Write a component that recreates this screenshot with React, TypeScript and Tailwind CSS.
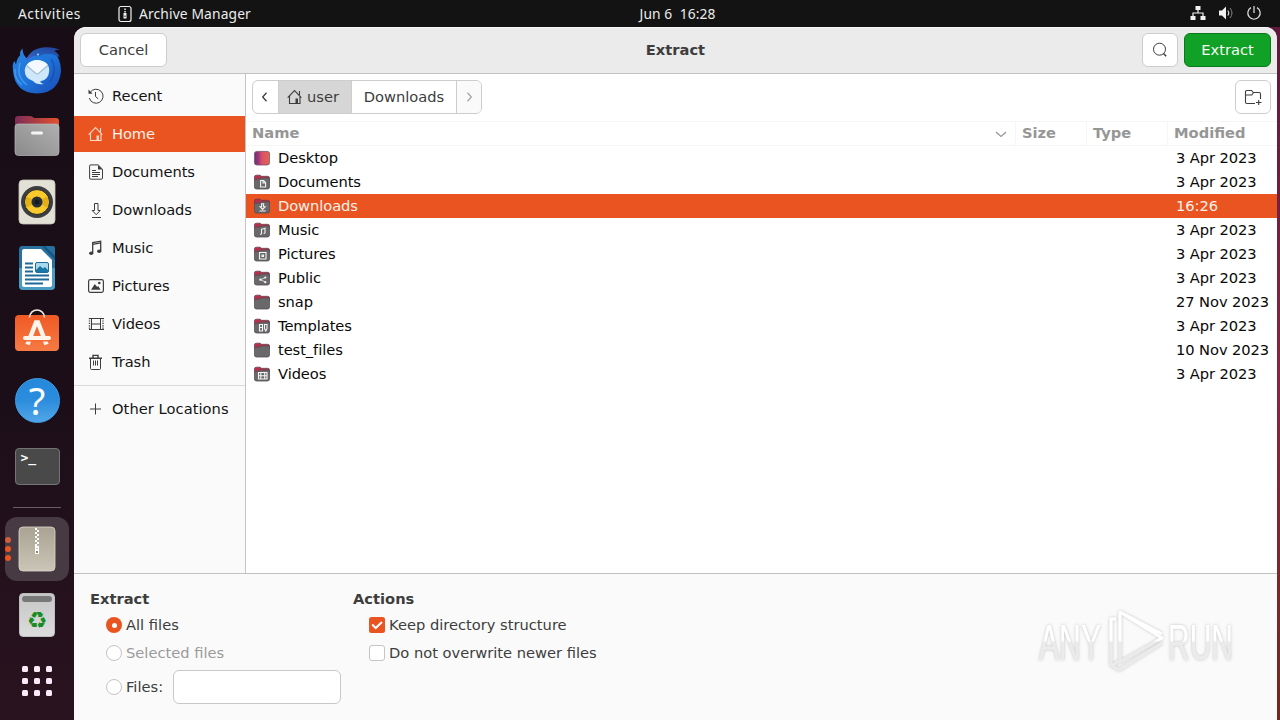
import type { ReactNode } from 'react';

interface Place {
  label: string;
  icon: ReactNode;
  active?: boolean;
}

interface FileRow {
  name: string;
  modified: string;
  emblem?: ReactNode;
  selected?: boolean;
}

const line = { fill: 'none', stroke: 'currentColor', strokeWidth: 1 };
const emblem = { fill: 'none', stroke: '#f4f4f4', strokeWidth: 1.1 };

function Icon({ children, className = '' }: { children: ReactNode; className?: string }) {
  return (
    <svg width="16" height="16" viewBox="0 0 16 16" className={`shrink-0 ${className}`}>
      {children}
    </svg>
  );
}

function HomeIcon() {
  return (
    <Icon>
      <path {...line} strokeWidth="1.1" d="M.7 8.6 7.5 1.6l6.8 7M2.5 7.2v7.3h10.500V7.200M12.500 2v4" />
      <path fill="currentColor" d="M8.500 9.500h2.500v5H8.500z" />
    </Icon>
  );
}

const PLACES: Place[] = [
  {
    label: 'Recent',
    icon: (
      <Icon>
        <path {...line} d="M2.2 4.4A7 7 0 1 1 1.3 10M7.5 4v4.5l2.7 2.3" />
        <path fill="currentColor" d="M.5 1.5v4.3h4.1z" />
      </Icon>
    ),
  },
  { label: 'Home', icon: <HomeIcon />, active: true },
  {
    label: 'Documents',
    icon: (
      <Icon>
        <path {...line} d="M3 .9h7.2l4.3 4.3V14a1.2 1.2 0 0 1-1.2 1.2H3A1.2 1.2 0 0 1 1.600 14V2.100A1.200 1.200 0 0 1 3 .9zM4 6.500h4M4 8.500h8M4 10.500h8M4 12.500h6" />
        <path fill="currentColor" d="M10 1v4.500h4.500z" />
      </Icon>
    ),
  },
  {
    label: 'Downloads',
    icon: (
      <Icon>
        <path {...line} d="M6.500 1.500h3.500v7h2.200l-4 4.200-4-4.200h2.300zM4 15.500h9" />
      </Icon>
    ),
  },
  {
    label: 'Music',
    icon: (
      <Icon>
        <path {...line} strokeWidth="1.3" d="M4.700 13V2.600l8-1.400V11M4.700 4.300l8-1.400" />
        <ellipse cx="3.200" cy="13.200" rx="2.100" ry="1.800" fill="currentColor" />
        <ellipse cx="11.200" cy="11.200" rx="2.100" ry="1.800" fill="currentColor" />
      </Icon>
    ),
  },
  {
    label: 'Pictures',
    icon: (
      <Icon>
        <rect {...line} x=".6" y="1.600" width="14.800" height="12.800" rx="1.800" strokeWidth="1.2" />
        <path fill="currentColor" d="M3 11.800 6.800 6l2.400 3 1-1 2.400 3.800z" />
        <circle cx="11.300" cy="5" r="1.300" fill="currentColor" />
      </Icon>
    ),
  },
  {
    label: 'Videos',
    icon: (
      <Icon>
        <path {...line} d="M3.500 2v12M12.500 2v12M1 2.500h15M1 13.500h15M3.500 8h9" />
        <path {...line} strokeWidth="1.400" strokeDasharray="1.2 1.2" d="M1.500 2v12M15 2v12" />
      </Icon>
    ),
  },
  {
    label: 'Trash',
    icon: (
      <Icon>
        <path {...line} d="M2.500 5v9.400q0 1.100 1 1.100h8q1 0 1-1.100V5M5.500 6.500v5M7.500 6.500v5M9.500 6.500v5" />
        <path {...line} strokeWidth="1.4" d="M1 4.200h13M5 3.600V1.400h5v2.200" />
      </Icon>
    ),
  },
];

const FILES: FileRow[] = [
  { name: 'Desktop', modified: '3 Apr 2023' },
  {
    name: 'Documents',
    modified: '3 Apr 2023',
    emblem: <path {...emblem} d="M6.6 6.5h3l2 2V13h-5zM9 6.5V9h2.5" />,
  },
  {
    name: 'Downloads',
    modified: '16:26',
    selected: true,
    emblem: <path {...emblem} d="M7.600 5.800h2v3h1.500l-2.500 2.600-2.500-2.600h1.500zM5.500 13h6.200" />,
  },
  {
    name: 'Music',
    modified: '3 Apr 2023',
    emblem: <path {...emblem} d="M7.500 12V7.300l3.500-1v5M6 12.300h1.500M9.600 11.300H11" />,
  },
  {
    name: 'Pictures',
    modified: '3 Apr 2023',
    emblem: <path {...emblem} d="M5.500 6.500H12V13H5.500zM8 9h1.500v1.500H8z" />,
  },
  {
    name: 'Public',
    modified: '3 Apr 2023',
    emblem: (
      <g fill="#f4f4f4">
        <path {...emblem} strokeWidth=".8" d="m11.500 7.500-5 2.200 5 2.500" />
        <circle cx="6.300" cy="9.700" r="1.100" />
        <circle cx="11.300" cy="7.500" r="1.100" />
        <circle cx="11.300" cy="12.200" r="1.100" />
      </g>
    ),
  },
  { name: 'snap', modified: '27 Nov 2023' },
  {
    name: 'Templates',
    modified: '3 Apr 2023',
    emblem: <path {...emblem} d="M5.500 6.500h3V13h-3zM5.500 9.500h3M10.500 6.500H13v4L11.800 13l-1.300-2.500z" />,
  },
  { name: 'test_files', modified: '10 Nov 2023' },
  {
    name: 'Videos',
    modified: '3 Apr 2023',
    emblem: <path {...emblem} d="M4.500 6.500H13V13H4.500zM6.800 6.500V13M10.700 6.500V13M4.500 9.700H13" />,
  },
];

function FolderIcon({ row }: { row: FileRow }) {
  if (row.name === 'Desktop') {
    return (
      <Icon>
        <defs>
          <linearGradient id="desk">
            <stop stopColor="#6f2f7c" />
            <stop offset=".25" stopColor="#963679" />
            <stop offset=".5" stopColor="#dd5069" />
            <stop offset="1" stopColor="#e4664b" />
          </linearGradient>
        </defs>
        <rect x=".4" y="1.400" width="15.200" height="13.600" rx="2.500" fill="url(#desk)" stroke="#79506c" strokeWidth=".8" />
      </Icon>
    );
  }
  return (
    <Icon>
      <path fill="#b5304b" stroke="#5c3a46" strokeWidth=".7" d="M.4 6V3.200q0-2 2-2H6l1.500 1.100h6.100q2 0 2 2V7H.4z" />
      <path fill="#6a686b" stroke="#514e51" strokeWidth=".8" d="M.4 6.200q0-1 1-1h4.300L7.200 4h7q1.400 0 1.400 1.200v7.600q0 2.200-2.200 2.200H2.600Q.4 15 .4 12.800z" />
      {row.emblem}
    </Icon>
  );
}

function ThunderbirdIcon() {
  return (
    <svg width="50" height="50" viewBox="0 0 50 50">
      <defs>
        <linearGradient id="tb" x1="0" y1="0" x2="1" y2="1">
          <stop stopColor="#2c84df" />
          <stop offset=".5" stopColor="#1e74da" />
          <stop offset="1" stopColor="#1a4bb5" />
        </linearGradient>
        <linearGradient id="tbHead" x1="0" y1="1" x2="1" y2="0">
          <stop stopColor="#5a51b8" />
          <stop offset=".4" stopColor="#245cb6" />
          <stop offset="1" stopColor="#273e98" />
        </linearGradient>
      </defs>
      <path fill="url(#tb)" d="M1 26q-1-8 1.500-10L4 19.500Q5 13 8 10.500 7.500 6 10.500 3.500q0 6 4 9.500L24 6l18 1q7 7 7 19-2 22-24 22.500Q3 48 1 26z" />
      <path fill="url(#tbHead)" d="M14 15Q19 2.500 34 2.200q8-.5 14 2.500-4 0-6 1.300 4 1.500 5.500 6-12-6-20-1-4-1-7 .5z" />
      <path fill="none" stroke="#55b0f8" strokeWidth="1.500" d="M3 24q-1 10 7 16M8 18q-4 14 7 22" opacity=".6" />
      <path fill="none" stroke="#143fa0" strokeWidth="1.500" d="M39 14q7 11-1 23" opacity=".5" />
      <path fill="#cfe7fa" d="M25.500 15q12 1 11.700 11-.5 9-9.200 10.500 1 1.500 3.500 2.500-7 1-10.500-3-8.500-2.500-8.300-11Q14 15.500 25.500 15z" />
      <path fill="#f3f9fe" d="M15 19.500q10-9 20.500 0L26.500 29q-1.200 1-2.400 0z" />
      <path fill="none" stroke="#a5bfd4" strokeWidth="1.2" d="m14.500 20.500 9.500 8q1.200 1 2.400 0l9.500-8" />
      <circle cx="26" cy="9.500" r="1" fill="#a7d6fa" />
    </svg>
  );
}

function FilesIcon() {
  return (
    <svg width="46" height="44" viewBox="0 0 46 44">
      <defs>
        <linearGradient id="ft">
          <stop stopColor="#7b2c57" />
          <stop offset="1" stopColor="#e4522c" />
        </linearGradient>
        <linearGradient id="fb" x1="0" y1="1" x2="1" y2="0">
          <stop stopColor="#8a8a8a" />
          <stop offset="1" stopColor="#b0b0b0" />
        </linearGradient>
      </defs>
      <path fill="url(#ft)" d="M1 14V5q0-3 3-3h12q2 0 4 2h22q3 0 3 3v9H1z" />
      <path fill="url(#fb)" stroke="#b9b9b9" strokeWidth=".7" d="M1 13q0-3 3-3h38q3 0 3 3v25q0 3.500-3.500 3.500h-37Q1 41.500 1 38z" />
      <rect x="17" y="17.500" width="12" height="3" rx="1.500" fill="#f5f5f5" />
    </svg>
  );
}

function SpeakerIcon() {
  return (
    <svg width="38" height="46" viewBox="0 0 38 46">
      <rect x="1" y="1" width="36" height="44" rx="4" fill="#e3e0d5" stroke="#c7c4ba" strokeWidth=".8" />
      <circle cx="19" cy="23" r="16" fill="#3c3d40" />
      <circle cx="19" cy="23" r="12.500" fill="#f7c92d" stroke="#25272c" />
      <path fill="#e3ae19" d="m19 23-11-6v12zM19 23l11-6v12z" />
      <circle cx="19" cy="23" r="5.500" fill="#272d35" />
      <circle cx="19" cy="23" r="2.500" fill="#161a20" />
    </svg>
  );
}

function WriterIcon() {
  return (
    <svg width="38" height="46" viewBox="0 0 38 46">
      <path fill="#28709d" d="M4 1h21l12 12v28q0 4-4 4H5q-4 0-4-4V5q0-4 3-4z" />
      <path fill="#55a9ce" d="M1 23h36v18q0 4-4 4H5q-4 0-4-4z" opacity=".75" />
      <path fill="#28709d" d="M26 1h9q2 0 2 2v10z" />
      <path fill="#155783" d="M24 1h3l10 10v4z" />
      <path fill="#fff" d="M6 4h17l11 11v25q0 2-2 2H6q-2 0-2-2V6q0-2 2-2z" />
      <path stroke="#1c6b98" strokeWidth="2" d="M7 18.500h8M7 22.500h8M7 26.500h8M7 30.500h24M7 34.500h24M7 38.500h18" />
      <rect x="17.500" y="17.500" width="13" height="10" rx="1.500" fill="#a8d9ed" stroke="#1c6b98" />
      <path fill="#1976a7" d="m18 25 4-4 3 2.500 2-1.500 3 3v2H18z" />
    </svg>
  );
}

function SoftwareIcon() {
  return (
    <svg width="46" height="54" viewBox="0 0 46 54">
      <defs>
        <linearGradient id="sw" x1="0" y1="0" x2="0" y2="1">
          <stop stopColor="#f05a24" />
          <stop offset="1" stopColor="#f67a45" />
        </linearGradient>
      </defs>
      <rect x="1" y="8" width="44" height="36" rx="4" fill="url(#sw)" />
      <path fill="none" stroke="#f8e9df" strokeWidth="1.500" d="M15.500 10.500C16 .5 30 .5 30.500 10.500" />
      <path fill="none" stroke="#fff5ec" strokeWidth="4.500" d="m13.500 37.500 8.500-22h2l8.500 22" />
      <path stroke="#f56932" strokeWidth="1.500" d="M9 33.800h28" />
      <path stroke="#fff5ec" strokeWidth="4" strokeLinecap="round" d="M11 31h24" />
    </svg>
  );
}

function HelpIcon() {
  return (
    <div className="flex h-[45px] w-[45px] items-center justify-center rounded-full border border-[#3f9ee7] bg-linear-to-b from-[#2488dc] via-[#2c8ddd] to-[#50a6e8] font-['Noto_Sans',sans-serif] text-[38px] leading-none text-white">
      ?
    </div>
  );
}

function TerminalIcon() {
  return (
    <div className="h-[37px] w-[45px] rounded-[4px] border border-[#747474] bg-[#494949] pt-[3px] pl-[5px] font-['DejaVu_Sans_Mono',monospace] text-[13px] leading-[12px] font-bold text-white">
      &gt;_
    </div>
  );
}

function ArchiveIcon() {
  return (
    <svg width="38" height="46" viewBox="0 0 38 46">
      <defs>
        <linearGradient id="ar" x1="0" y1="0" x2="0" y2="1">
          <stop stopColor="#aaa393" />
          <stop offset="1" stopColor="#cbc5b7" />
        </linearGradient>
      </defs>
      <rect x="1" y="1" width="36" height="44" rx="4" fill="url(#ar)" stroke="#ddd9ce" strokeWidth=".8" />
      <path stroke="#fff" strokeWidth="2" strokeDasharray="2 2" d="M18 2v18M20 4v16" />
      <path fill="#fff" d="M17 20h4v8h-4z" />
      <path fill="#8c8678" d="M18.500 22h1v1h-1zM18 25h2v2h-2z" />
    </svg>
  );
}

function TrashIcon() {
  return (
    <div className="flex h-11 w-9 flex-col items-center rounded-[4px] border border-[#bdbdbd] bg-linear-to-b from-[#c6c6c6] to-[#dcdcdc] pt-[2px]">
      <span className="h-[6px] w-[30px] shrink-0 rounded-full bg-[#787878]" />
      <span className="mt-[7px] font-['DejaVu_Sans',sans-serif] text-[23px] leading-[23px] text-[#198b23]">♻</span>
    </div>
  );
}

function AppsIcon() {
  return (
    <div className="grid grid-cols-3 gap-[6px]">
      {Array.from({ length: 9 }, (_, i) => (
        <span key={i} className="h-[6px] w-[6px] rounded-[1.5px] bg-[#faeafa]" />
      ))}
    </div>
  );
}

function DockItem({ children, active }: { children: ReactNode; active?: boolean }) {
  return (
    <div className="flex h-[66px] w-[74px] shrink-0 items-center justify-center">
      <div className={`relative flex h-16 w-16 items-center justify-center rounded-xl ${active ? 'bg-[#483a43]' : ''}`}>
        {children}
        {active && (
          <div className="absolute top-5 left-0 flex flex-col gap-[3px]">
            <span className="h-[6px] w-[6px] rounded-full bg-[#cf5f3c]" />
            <span className="h-[6px] w-[6px] rounded-full bg-[#e95420]" />
            <span className="h-[6px] w-[6px] rounded-full bg-[#e95420]" />
          </div>
        )}
      </div>
    </div>
  );
}

function TopBar() {
  return (
    <header className="grid h-[27px] shrink-0 grid-cols-[1fr_auto_1fr] items-center bg-[#131313] font-['Noto_Sans',sans-serif] text-[13.8px] leading-none text-[#ececec]">
      <div className="flex items-center pl-[18px]">
        <span className="w-[100px] tracking-[0.55px]">Activities</span>
        <svg width="14" height="18" viewBox="0 0 14 18" className="mr-[7px] shrink-0">
          <rect x="1" y="1.5" width="12" height="15" rx="2" fill="none" stroke="#f2f2f2" strokeWidth="1.200" />
          <path fill="#f2f2f2" d="M6.300 3.500h1.500V5H6.300zM6.300 6h1.500v1.500H6.300zM5.500 8h3v5.500h-3z" />
          <path fill="#131313" d="M6.500 10.500h1V12h-1z" />
        </svg>
        <span className="tracking-[0.14px]">Archive Manager</span>
      </div>
      <span className="ml-[75px] tracking-[0.1px] whitespace-pre">Jun 6  16:28</span>
      <div className="flex items-center justify-end gap-[12px] pr-[18px] pb-[1px]">
        <Icon>
          <path fill="#f2f2f2" d="M5.500 1h5v4h-5zM.5 11h5v4h-5zM10.500 11h5v4h-5z" />
          <path fill="none" stroke="#f2f2f2" strokeWidth="1.200" d="M8 5v3M3 11V8h10v3" />
        </Icon>
        <Icon>
          <path fill="#f2f2f2" d="M1 5.500h3l4-4v13l-4-4H1z" />
          <path fill="none" stroke="#ddd" strokeWidth="1.100" d="M9.800 5.500q2 2.500 0 5" />
          <path fill="none" stroke="#858585" d="M12 3q4 5 0 10" />
        </Icon>
        <Icon>
          <path fill="none" stroke="#e5e5e5" strokeWidth="1.200" d="M8 1v7M5 2.600a6.200 6.200 0 1 0 6 0" />
        </Icon>
      </div>
    </header>
  );
}

function Dock() {
  return (
    <nav className="flex w-[74px] shrink-0 flex-col bg-linear-to-b from-[#180d16] via-[#1b0e18] to-[#29131f] pt-[10px]">
      <DockItem><ThunderbirdIcon /></DockItem>
      <DockItem><FilesIcon /></DockItem>
      <DockItem><SpeakerIcon /></DockItem>
      <DockItem><WriterIcon /></DockItem>
      <DockItem><SoftwareIcon /></DockItem>
      <DockItem><HelpIcon /></DockItem>
      <DockItem><TerminalIcon /></DockItem>
      <div className="mx-[13px] mt-2 mb-2 h-px shrink-0 bg-[#665e64]" />
      <DockItem active><ArchiveIcon /></DockItem>
      <DockItem><TrashIcon /></DockItem>
      <DockItem><AppsIcon /></DockItem>
    </nav>
  );
}

function DialogHeader() {
  return (
    <div className="grid h-[47px] shrink-0 grid-cols-[1fr_auto_1fr] items-center rounded-t-xl border-b border-[#c1c1c1] bg-[#ebebeb] px-[6px] shadow-[inset_0_1px_0_#f7f7f7]">
      <button className="h-[34px] w-[87px] rounded-md border border-[#cdcdcd] bg-white text-[#3d3d3d]">Cancel</button>
      <h1 className="font-bold text-[#3d3d3d]">Extract</h1>
      <div className="flex justify-end gap-[6px]">
        <button className="flex h-[34px] w-9 items-center justify-center rounded-md border border-[#cdcdcd] bg-white text-[#3d3d3d]">
          <Icon>
            <circle {...line} cx="7.500" cy="7.200" r="6" />
            <path {...line} strokeWidth="1.500" d="m11.500 11.500 2.700 2.700" />
          </Icon>
        </button>
        <button className="h-[34px] w-[87px] rounded-md border border-[#0b7a1c] bg-[#12a127] text-[#f4fbf4]">Extract</button>
      </div>
    </div>
  );
}

function Sidebar() {
  return (
    <aside className="w-[172px] shrink-0 border-r border-[#c4c4c4] bg-[#fafafa] pt-1">
      <ul className="flex flex-col gap-[2px] tracking-[-0.07px]">
        {PLACES.map((place) => (
          <li
            key={place.label}
            className={`flex h-9 items-center gap-2 pl-[14px] ${
              place.active ? 'bg-[#e95420] text-[#fff1ea]' : 'text-[#141414]'
            }`}
          >
            <span className={place.active ? 'text-[#ffd9c9]' : 'text-[#3d3d3d]'}>{place.icon}</span>
            {place.label}
          </li>
        ))}
      </ul>
      <div className="mt-[5px] mb-[5px] h-px bg-[#dadada]" />
      <div className="flex h-9 items-center gap-2 pl-[14px] tracking-[0.05px] text-[#141414]">
        <Icon className="text-[#3d3d3d]">
          <path {...line} d="M7.500 2.500v11M2 8h11" />
        </Icon>
        Other Locations
      </div>
    </aside>
  );
}

function Browser() {
  return (
    <section className="flex min-w-0 flex-1 flex-col bg-white">
      <div className="flex h-[47px] shrink-0 items-start justify-between px-[6px] pt-[6px] text-[#3d3d3d]">
        <div className="flex h-[34px] w-[230px] overflow-hidden rounded-md border border-[#cdcdcd]">
          <button className="flex w-[25px] items-center justify-center pr-[2px]">
            <Icon>
              <path {...line} strokeWidth="1.3" d="M9.500 3.700 5.700 8l3.800 4.300" />
            </Icon>
          </button>
          <button className="flex w-[74px] items-center gap-1 border-x border-[#cdcdcd] bg-[#d6d6d6] pl-2">
            <HomeIcon />
            user
          </button>
          <button className="w-[104px]">Downloads</button>
          <button className="flex flex-1 items-center justify-center border-l border-[#cdcdcd] bg-[#fafafa] text-[#a5a5a5]">
            <Icon>
              <path {...line} strokeWidth="1.3" d="M6.500 3.700 10.300 8l-3.800 4.300" />
            </Icon>
          </button>
        </div>
        <button className="flex h-[34px] w-9 items-center justify-center rounded-md border border-[#cdcdcd] bg-white">
          <svg width="18" height="16" viewBox="0 0 18 16">
            <path {...line} strokeWidth="1.1" d="M11 14.500H3Q1.500 14.500 1.500 13V2.500Q1.500 1.500 3 1.500h4.500L9.300 3.500H15q1.500 0 1.500 1.500v5M1.500 6h6.300l1.800-2.500M12 13.500h5.500M14.700 11v5" />
          </svg>
        </button>
      </div>
      <div className="flex h-[25px] shrink-0 items-center border-y border-[#f5f5f5] font-bold text-[#969696]">
        <div className="flex h-full w-[770px] items-center justify-between border-r border-[#f5f5f5] px-[6px]">
          Name
          <Icon>
            <path {...line} strokeWidth="1.2" d="m3 6 5 4.500L13 6" />
          </Icon>
        </div>
        <div className="flex h-full w-[71px] items-center border-r border-[#f5f5f5] pl-[6px]">Size</div>
        <div className="flex h-full w-[81px] items-center border-r border-[#f5f5f5] pl-[6px]">Type</div>
        <div className="pl-[6px]">Modified</div>
      </div>
      <div className="tracking-[-0.07px]">
        {FILES.map((row) => (
          <div
            key={row.name}
            className={`flex h-6 items-center pl-2 ${row.selected ? 'bg-[#e95420] text-[#fff1ea]' : 'text-[#080808]'}`}
          >
            <FolderIcon row={row} />
            <span className="ml-2 flex-1">{row.name}</span>
            <span className="w-[101px] whitespace-nowrap">{row.modified}</span>
          </div>
        ))}
      </div>
    </section>
  );
}

function Radio({ checked }: { checked?: boolean }) {
  return (
    <span
      className={`flex h-4 w-4 shrink-0 items-center justify-center rounded-full ${
        checked ? 'bg-[#e95420]' : 'border border-[#c4c4c4] bg-white'
      }`}
    >
      {checked && <span className="h-[5px] w-[5px] rounded-full bg-white" />}
    </span>
  );
}

function Watermark() {
  return (
    <svg width="224" height="74" viewBox="0 0 224 74" className="absolute right-[20px] bottom-[39px]">
      <defs>
        <linearGradient id="wm" x1="0" y1="0" x2="0" y2="74" gradientUnits="userSpaceOnUse">
          <stop offset=".45" stopColor="#ffffff" />
          <stop offset=".48" stopColor="#ebebeb" />
        </linearGradient>
        <filter id="halo" x="-10%" y="-20%" width="120%" height="140%">
          <feDropShadow dx="0" dy="0" stdDeviation="1.500" floodColor="#777" floodOpacity=".45" />
        </filter>
      </defs>
      <g filter="url(#halo)">
        <g fill="url(#wm)" fontFamily="Liberation Sans Narrow, Liberation Sans, sans-serif" fontSize="50">
          <text x="6" y="53" textLength="62" lengthAdjust="spacingAndGlyphs">ANY</text>
          <text x="135" y="53" textLength="65" lengthAdjust="spacingAndGlyphs">RUN</text>
        </g>
        <g fill="none" stroke="url(#wm)" strokeWidth="3" strokeLinejoin="round">
          <path d="M87 5v50l42-24zM87 5l42 22" />
          <path d="M83 12h-5v46l8 5 43-27M80 58l6-4" />
        </g>
      </g>
    </svg>
  );
}

function ExtractOptions() {
  return (
    <section className="relative flex h-[147px] shrink-0 border-t border-[#c1c1c1] bg-[#fafafa] pt-[13px] pl-4 text-[#3d3d3d]">
      <div className="w-[263px]">
        <h2 className="flex h-6 items-center font-bold">Extract</h2>
        <label className="flex h-7 items-center gap-1 pl-4">
          <Radio checked />
          All files
        </label>
        <label className="flex h-7 items-center gap-1 pl-4 text-[#9b9b9b]">
          <Radio />
          Selected files
        </label>
        <label className="flex h-10 items-center gap-1 pl-4">
          <Radio />
          <span className="w-[43px]">Files:</span>
          <input className="h-[34px] w-[168px] rounded-md border border-[#c8c8c8] bg-white" />
        </label>
      </div>
      <div>
        <h2 className="flex h-6 items-center font-bold">Actions</h2>
        <label className="flex h-7 items-center gap-1 pl-4">
          <Icon>
            <rect width="16" height="16" rx="2.500" fill="#e95420" />
            <path fill="none" stroke="#fff" strokeWidth="2" d="m3.200 7.500 3.500 3.500 6.300-6" />
          </Icon>
          Keep directory structure
        </label>
        <label className="flex h-7 items-center gap-1 pl-4">
          <span className="h-4 w-4 rounded-[3px] border border-[#c4c4c4] bg-white" />
          Do not overwrite newer files
        </label>
      </div>
      <Watermark />
    </section>
  );
}

export default function App() {
  return (
    <div className="flex h-[720px] w-[1280px] flex-col overflow-hidden bg-[#131313]">
      <TopBar />
      <div className="flex min-h-0 flex-1 bg-[linear-gradient(to_right,#180d16_50%,transparent_50%),linear-gradient(#5b1a3a,#8a2440,#74281c)]">
        <Dock />
        <main className="flex w-[1203px] flex-col font-['DejaVu_Sans',sans-serif] text-[14.67px] leading-none">
          <DialogHeader />
          <div className="flex min-h-0 flex-1">
            <Sidebar />
            <Browser />
          </div>
          <ExtractOptions />
        </main>
      </div>
    </div>
  );
}
